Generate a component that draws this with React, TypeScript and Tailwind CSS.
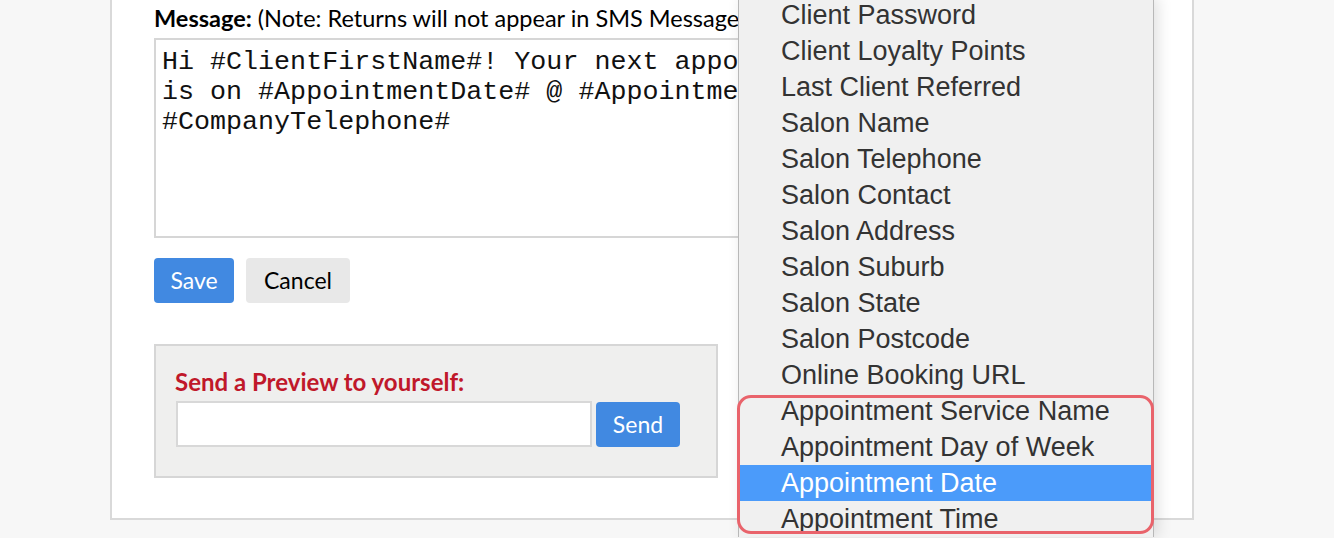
import React from 'react';

const fields = [
  'Client Password',
  'Client Loyalty Points',
  'Last Client Referred',
  'Salon Name',
  'Salon Telephone',
  'Salon Contact',
  'Salon Address',
  'Salon Suburb',
  'Salon State',
  'Salon Postcode',
  'Online Booking URL',
  'Appointment Service Name',
  'Appointment Day of Week',
  'Appointment Date',
  'Appointment Time',
];

export default function App() {
  return (
    <div className="relative h-[538px] overflow-hidden bg-[#f7f7f7] font-['Lato',sans-serif]">
      <div className="ml-[110px] h-[520px] w-[1084px] border-2 border-t-0 border-[#d9d9d9] bg-white pl-[42px] pt-[6px]">
        <div className="text-[23.5px] leading-[24px] text-black whitespace-nowrap">
          <span className="font-bold">Message:</span> (Note: Returns will not appear in SMS Messages)
        </div>

        <div className="mt-[8px] h-[200px] w-[1000px] border-2 border-[#d6d6d6] bg-white px-[6px] pt-[7px] font-['Liberation_Mono',monospace] text-[26.7px] leading-[30px] text-[#111] whitespace-nowrap overflow-hidden">
          <div>Hi #ClientFirstName#! Your next appointment with #CompanyName#</div>
          <div>is on #AppointmentDate# @ #AppointmentTime#. Any questions call</div>
          <div>#CompanyTelephone#</div>
        </div>

        <div className="mt-[20px] flex gap-[12px]">
          <button className="h-[45px] w-[80px] rounded-[4px] bg-[#4189e1] text-[23px] text-white">Save</button>
          <button className="h-[45px] w-[104px] rounded-[4px] bg-[#e8e8e8] text-[23px] text-black">Cancel</button>
        </div>

        <div className="mt-[41px] h-[134px] w-[564px] border-2 border-[#d6d6d6] bg-[#efefee] pl-[19px] pt-[24px]">
          <div className="text-[24px] font-bold leading-[24px] text-[#c0182a] whitespace-nowrap">Send a Preview to yourself:</div>
          <div className="mt-[7px] flex items-start gap-[4px]">
            <input className="ml-[1px] h-[46px] w-[416px] border-2 border-[#d8d8d8] bg-white outline-none" />
            <button className="mt-[1px] h-[45px] w-[84px] rounded-[4px] bg-[#4189e1] text-[23px] text-white">Send</button>
          </div>
        </div>
      </div>

      <div className="absolute left-[738px] top-[-3px] w-[416px] border-x border-[#b8b8b8] bg-[#f0f0f0] shadow-[4px_0_14px_rgba(0,0,0,0.12)] font-['Liberation_Sans',Arial,sans-serif]">
        {fields.map((f) => (
          <div
            key={f}
            className={
              f === 'Appointment Date'
                ? 'h-[36px] pl-[42px] text-[27px] leading-[36px] text-white bg-[#4b9bfa] whitespace-nowrap'
                : 'h-[36px] pl-[42px] text-[27px] leading-[36px] text-[#333] whitespace-nowrap'
            }
          >
            {f}
          </div>
        ))}
      </div>

      <div className="pointer-events-none absolute left-[737px] top-[395px] h-[139px] w-[417px] rounded-[14px] border-[3px] border-[#e9636b]" />
    </div>
  );
}
